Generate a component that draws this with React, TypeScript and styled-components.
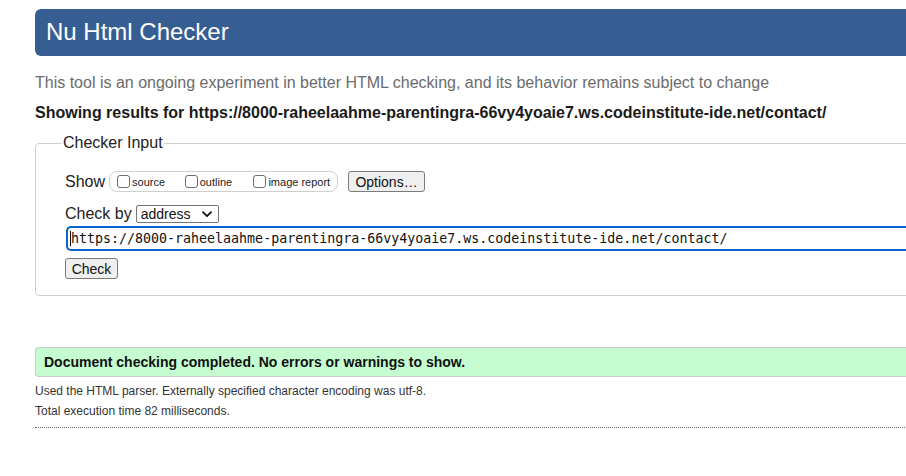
import React from "react";
import styled, { createGlobalStyle } from "styled-components";

const Global = createGlobalStyle`
  html, body { margin: 0; padding: 0; background: #fff; overflow: hidden; }
  body { font-family: "Liberation Sans", Arial, sans-serif; color: #111; }
  * { box-sizing: border-box; }
`;

const Page = styled.main`
  width: 935px;
  padding-left: 35px;
  padding-top: 9px;
`;

const Header = styled.h1`
  margin: 0;
  height: 47px;
  display: flex;
  align-items: center;
  padding: 0 11px 1px;
  background: #365e93;
  color: #fff;
  font-size: 24px;
  font-weight: normal;
  border-radius: 6px 0 0 6px;
`;

const Intro = styled.p`
  margin: 17px 0 0;
  font-size: 16px;
  line-height: 20px;
  color: #6b6b6b;
`;

const Results = styled.p`
  margin: 10px 0 0;
  font-size: 16px;
  line-height: 20px;
  font-weight: bold;
  color: #1a1a1a;
`;

const Fieldset = styled.fieldset`
  margin: 10px 0 0;
  padding: 18px 0 16px 29px;
  border: 1px solid #d0d0d0;
  border-radius: 4px;
  min-width: 0;
`;

const Legend = styled.legend`
  font-size: 16px;
  line-height: 20px;
  padding: 0 1px;
  margin-left: -3px;
  color: #222;
`;

const Row = styled.div<{ $gap?: number }>`
  display: flex;
  align-items: center;
  margin-top: ${(p) => p.$gap ?? 0}px;
  font-size: 16px;
  color: #222;
`;

const Label = styled.span`
  margin-right: 4px;
  line-height: 20px;
`;

const Group = styled.div`
  display: flex;
  align-items: center;
  height: 21px;
  width: 229px;
  border: 1px solid #cfcfcf;
  border-radius: 8px;
  padding-left: 7px;
  margin-right: 10px;
  font-size: 11px;
  color: #222;
`;

const Option = styled.label<{ $w: number }>`
  display: flex;
  align-items: center;
  width: ${(p) => p.$w}px;
`;

const Box = styled.span`
  width: 13px;
  height: 13px;
  border: 1px solid #6e6e6e;
  border-radius: 3px;
  background: #fff;
  margin-right: 2px;
  margin-top: -1px;
`;

const Button = styled.button<{ $w: number }>`
  font-family: "Liberation Sans", Arial, sans-serif;
  font-size: 14px;
  width: ${(p) => p.$w}px;
  height: 21px;
  padding: 0;
  border: 1px solid #7a7a7a;
  border-radius: 3px;
  background: #efefef;
  color: #111;
`;

const Select = styled.div`
  display: flex;
  align-items: center;
  justify-content: space-between;
  width: 83px;
  height: 18px;
  border: 1px solid #767676;
  border-radius: 2px;
  padding: 0 6px 0 4px;
  font-size: 14px;
  color: #111;
  background: #fff;
`;

const InputRow = styled.div`
  margin-top: 2px;
`;

const UrlInput = styled.div`
  height: 25px;
  margin-left: 1px;
  border: 2px solid #0b63ce;
  border-right: none;
  border-radius: 5px 0 0 5px;
  display: flex;
  align-items: center;
  padding-left: 2px;
  font-family: "DejaVu Sans Mono", "Liberation Mono", monospace;
  font-size: 13.3px;
  color: #111;
  white-space: nowrap;
`;

const Caret = styled.span`
  display: inline-block;
  width: 1px;
  height: 15px;
  background: #111;
`;

const Success = styled.div`
  margin-top: 51px;
  height: 30px;
  display: flex;
  align-items: center;
  padding: 0 0 1px 8px;
  background: #c5fdd0;
  border: 1px solid #cccccc;
  border-right: none;
  border-radius: 4px 0 0 4px;
  font-size: 14px;
  font-weight: bold;
  color: #111;
`;

const Details = styled.p<{ $gap: number }>`
  margin: ${(p) => p.$gap}px 0 0;
  font-size: 12px;
  line-height: 16px;
  color: #333;
`;

const Dotted = styled.hr`
  margin: 8px 0 0;
  width: 870px;
  border: none;
  border-top: 1px dotted #6a6a6a;
`;

const Chevron = () => (
  <svg width="10" height="7" viewBox="0 0 10 7">
    <path d="M1 1.2 L5 5.2 L9 1.2" fill="none" stroke="#111" strokeWidth="1.8" strokeLinecap="round" strokeLinejoin="round" />
  </svg>
);

const url = "https://8000-raheelaahme-parentingra-66vy4yoaie7.ws.codeinstitute-ide.net/contact/";

export default function App() {
  return (
    <>
      <Global />
      <Page>
        <Header>Nu Html Checker</Header>
        <Intro>This tool is an ongoing experiment in better HTML checking, and its behavior remains subject to change</Intro>
        <Results>Showing results for {url}</Results>
        <Fieldset>
          <Legend>Checker Input</Legend>
          <Row>
            <Label>Show</Label>
            <Group>
              <Option $w={68}><Box />source</Option>
              <Option $w={69}><Box />outline</Option>
              <Option $w={84}><Box />image report</Option>
            </Group>
            <Button $w={77}>Options…</Button>
          </Row>
          <Row $gap={12}>
            <Label>Check by</Label>
            <Select>address<Chevron /></Select>
          </Row>
          <InputRow>
            <UrlInput><Caret />{url}</UrlInput>
          </InputRow>
          <Row $gap={7}>
            <Button $w={53}>Check</Button>
          </Row>
        </Fieldset>
        <Success>Document checking completed. No errors or warnings to show.</Success>
        <Details $gap={6}>Used the HTML parser. Externally specified character encoding was utf-8.</Details>
        <Details $gap={4}>Total execution time 82 milliseconds.</Details>
        <Dotted />
      </Page>
    </>
  );
}
